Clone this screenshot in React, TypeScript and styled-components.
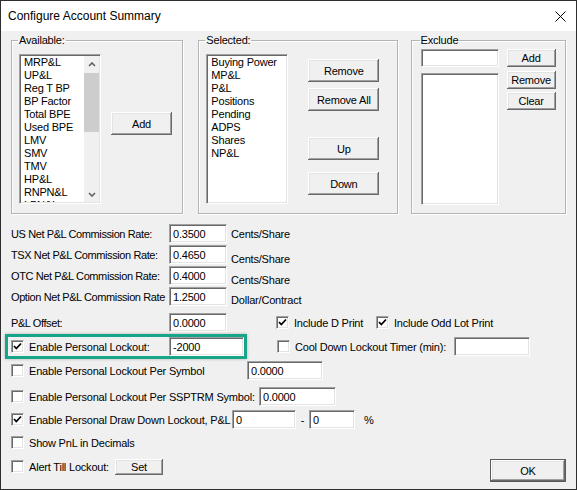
import React from "react";
import styled, { createGlobalStyle } from "styled-components";

const GlobalStyle = createGlobalStyle`
  html, body {
    margin: 0;
    padding: 0;
    background: #ffffff;
  }
`;

const Window = styled.div`
  width: 577px;
  height: 490px;
  box-sizing: border-box;
  border: 1px solid #2e2e2e;
  background: #f0f0f0;
  display: flex;
  flex-direction: column;
  font-family: "Liberation Sans", Arial, sans-serif;
  font-size: 11px;
  letter-spacing: -0.2px;
  color: #000;
  overflow: hidden;
`;

const TitleBar = styled.div`
  height: 30px;
  flex: none;
  background: #ffffff;
  display: flex;
  align-items: center;
  justify-content: space-between;
  padding: 0 10px 0 7px;
`;

const Title = styled.span`
  font-size: 12px;
  letter-spacing: 0;
`;

const Content = styled.div`
  flex: 1;
  padding: 3px 10px 0 10px;
  display: flex;
  flex-direction: column;
`;

const TopRow = styled.div`
  display: flex;
  align-items: flex-start;
`;

const Group = styled.fieldset<{ $width: number; $pad?: number; $ml?: number }>`
  margin: 0 0 0 ${(p) => p.$ml ?? 0}px;
  padding: 0 ${(p) => p.$pad ?? 7}px;
  min-width: 0;
  width: ${(p) => p.$width}px;
  height: 180px;
  box-sizing: border-box;
  border: 1px solid #b4b4b4;
  box-shadow: inset 1px 1px #ffffff, 1px 1px #ffffff;
`;

const Legend = styled.legend`
  padding: 0 1px;
  margin-left: -1px;
  line-height: 13px;
`;

const GroupBody = styled.div<{ $top?: number; $gap?: number }>`
  display: flex;
  align-items: flex-start;
  gap: ${(p) => p.$gap ?? 0}px;
  padding-top: ${(p) => p.$top ?? 0}px;
`;

const Column = styled.div<{ $ml?: number; $mt?: number }>`
  display: flex;
  flex-direction: column;
  margin-left: ${(p) => p.$ml ?? 0}px;
  margin-top: ${(p) => p.$mt ?? 0}px;
`;

const sunken = `
  border: 1px solid;
  border-color: #a0a0a0 #ffffff #ffffff #a0a0a0;
  box-shadow: inset 1px 1px #696969, inset -1px -1px #e3e3e3;
`;

const ListBox = styled.div<{ $width: number; $height: number; $mt?: number }>`
  ${sunken}
  width: ${(p) => p.$width}px;
  height: ${(p) => p.$height}px;
  margin-top: ${(p) => p.$mt ?? 0}px;
  box-sizing: border-box;
  padding: 1px;
  background: #ffffff;
  display: flex;
  overflow: hidden;
  flex: none;
`;

const ListItems = styled.div`
  flex: 1;
  padding: 0 0 0 3px;
  overflow: hidden;
`;

const Item = styled.div`
  line-height: 13px;
  white-space: nowrap;
`;

const ScrollBar = styled.div`
  width: 15px;
  flex: none;
  background: #f0f0f0;
  display: flex;
  flex-direction: column;
`;

const ScrollArrow = styled.div<{ $height: number }>`
  height: ${(p) => p.$height}px;
  display: flex;
  align-items: center;
  justify-content: center;
  flex: none;
`;

const ScrollThumb = styled.div`
  height: 59px;
  background: #cdcdcd;
  flex: none;
`;

const ScrollTrack = styled.div`
  flex: 1;
`;

const Button = styled.button<{ $width: number; $height?: number; $mt?: number; $default?: boolean }>`
  width: ${(p) => p.$width}px;
  height: ${(p) => p.$height ?? 23}px;
  margin: ${(p) => p.$mt ?? 0}px 0 0 0;
  padding: 0;
  box-sizing: border-box;
  flex: none;
  font-family: inherit;
  font-size: 11px;
  letter-spacing: -0.2px;
  color: #000;
  background: #f0f0f0;
  border: ${(p) => (p.$default ? "1px solid #5a5a5a" : "none")};
  box-shadow: inset -1px -1px #696969, inset 1px 1px #ffffff,
    inset -2px -2px #a0a0a0, inset 2px 2px #e3e3e3;
`;

const TextBox = styled.input<{ $width: number; $height?: number; $mt?: number }>`
  ${sunken}
  width: ${(p) => p.$width}px;
  height: ${(p) => p.$height ?? 19}px;
  margin: ${(p) => p.$mt ?? 0}px 0 0 0;
  box-sizing: border-box;
  padding: 0 0 0 3px;
  flex: none;
  background: #ffffff;
  font-family: inherit;
  font-size: 11px;
  letter-spacing: -0.2px;
  color: #000;
  outline: none;
`;

const FormRow = styled.div<{ $mt: number }>`
  display: flex;
  align-items: center;
  height: 19px;
  margin-top: ${(p) => p.$mt}px;
`;

const FieldLabel = styled.span`
  width: 158px;
  flex: none;
  white-space: nowrap;
  letter-spacing: -0.4px;
`;

const Unit = styled.span<{ $drop?: number }>`
  margin-left: 4px;
  padding-top: ${(p) => p.$drop ?? 0}px;
  white-space: nowrap;
`;

const CheckItem = styled.label<{ $ml?: number }>`
  display: flex;
  align-items: center;
  margin-left: ${(p) => p.$ml ?? 0}px;
`;

const CheckText = styled.span<{ $width?: number }>`
  margin-left: 5px;
  width: ${(p) => (p.$width ? `${p.$width}px` : "auto")};
  flex: none;
  white-space: nowrap;
`;

const Box = styled.span`
  ${sunken}
  width: 13px;
  height: 13px;
  box-sizing: border-box;
  flex: none;
  background: #ffffff;
  display: flex;
  align-items: center;
  justify-content: center;
`;

const Highlight = styled.div`
  display: flex;
  align-items: center;
  margin: -3px 0 -3px -6px;
  padding-left: 3px;
  border: 3px solid #17a589;
  box-shadow: 0 0 3px rgba(0, 0, 0, 0.25);
`;

const Dash = styled.span`
  width: 13px;
  text-align: center;
  flex: none;
`;

const Percent = styled.span`
  margin-left: 9px;
`;

const OkButton = styled(Button)`
  margin-left: auto;
  align-self: flex-start;
  margin-top: 2px;
`;

const Check: React.FC<{ checked?: boolean }> = ({ checked }) => (
  <Box>
    {checked && (
      <svg width="9" height="9" viewBox="0 0 9 9">
        <polyline points="1,4 3.3,6.5 8,1.5" fill="none" stroke="#000" strokeWidth="1.8" />
      </svg>
    )}
  </Box>
);

const Chevron: React.FC<{ down?: boolean }> = ({ down }) => (
  <svg width="8" height="5" viewBox="0 0 8 5">
    <polyline
      points={down ? "1,1 4,4 7,1" : "1,4 4,1 7,4"}
      fill="none"
      stroke="#606060"
      strokeWidth="1.6"
    />
  </svg>
);

const available = [
  "MRP&L", "UP&L", "Reg T BP", "BP Factor", "Total BPE", "Used BPE",
  "LMV", "SMV", "TMV", "HP&L", "RNPN&L", "LPN&L",
];

const selected = ["Buying Power", "MP&L", "P&L", "Positions", "Pending", "ADPS", "Shares", "NP&L"];

const App: React.FC = () => {
  return (
    <>
      <GlobalStyle />
      <Window>
        <TitleBar>
          <Title>Configure Account Summary</Title>
          <svg width="11" height="11" viewBox="0 0 11 11">
            <path d="M0.5 0.5 L10.5 10.5 M10.5 0.5 L0.5 10.5" stroke="#000" strokeWidth="1" />
          </svg>
        </TitleBar>
        <Content>
          <TopRow>
            <Group $width={173}>
              <Legend>Available:</Legend>
              <GroupBody $top={7}>
                <ListBox $width={82} $height={150}>
                  <ListItems>
                    {available.map((a) => (
                      <Item key={a}>{a}</Item>
                    ))}
                  </ListItems>
                  <ScrollBar>
                    <ScrollArrow $height={17}>
                      <Chevron />
                    </ScrollArrow>
                    <ScrollThumb />
                    <ScrollTrack />
                    <ScrollArrow $height={16}>
                      <Chevron down />
                    </ScrollArrow>
                  </ScrollBar>
                </ListBox>
                <Column $ml={10} $mt={58}>
                  <Button $width={61}>Add</Button>
                </Column>
              </GroupBody>
            </Group>
            <Group $width={200} $ml={15}>
              <Legend>Selected:</Legend>
              <GroupBody $top={7}>
                <ListBox $width={82} $height={150}>
                  <ListItems>
                    {selected.map((s) => (
                      <Item key={s}>{s}</Item>
                    ))}
                  </ListItems>
                </ListBox>
                <Column $ml={20} $mt={5}>
                  <Button $width={71}>Remove</Button>
                  <Button $width={71} $mt={6}>Remove All</Button>
                  <Button $width={71} $mt={26}>Up</Button>
                  <Button $width={71} $mt={12}>Down</Button>
                </Column>
              </GroupBody>
            </Group>
            <Group $width={156} $ml={13} $pad={9}>
              <Legend>Exclude</Legend>
              <GroupBody $gap={8}>
                <Column>
                  <TextBox $width={78} $height={18} $mt={2} />
                  <ListBox $width={78} $height={132} $mt={6} />
                </Column>
                <Column>
                  <Button $width={49} $height={18} $mt={2}>Add</Button>
                  <Button $width={49} $height={18} $mt={4}>Remove</Button>
                  <Button $width={49} $height={18} $mt={3}>Clear</Button>
                </Column>
              </GroupBody>
            </Group>
          </TopRow>

          <FormRow $mt={10}>
            <FieldLabel>US Net P&amp;L Commission Rate:</FieldLabel>
            <TextBox $width={58} defaultValue="0.3500" readOnly />
            <Unit>Cents/Share</Unit>
          </FormRow>
          <FormRow $mt={2}>
            <FieldLabel>TSX Net P&amp;L Commission Rate:</FieldLabel>
            <TextBox $width={58} defaultValue="0.4650" readOnly />
            <Unit $drop={9}>Cents/Share</Unit>
          </FormRow>
          <FormRow $mt={2}>
            <FieldLabel>OTC Net P&amp;L Commission Rate:</FieldLabel>
            <TextBox $width={58} defaultValue="0.4000" readOnly />
            <Unit $drop={9}>Cents/Share</Unit>
          </FormRow>
          <FormRow $mt={2}>
            <FieldLabel>Option Net P&amp;L Commission Rate</FieldLabel>
            <TextBox $width={58} defaultValue="1.2500" readOnly />
            <Unit $drop={7}>Dollar/Contract</Unit>
          </FormRow>
          <FormRow $mt={7}>
            <FieldLabel>P&amp;L Offset:</FieldLabel>
            <TextBox $width={58} defaultValue="0.0000" readOnly />
            <CheckItem $ml={49}>
              <Check checked />
              <CheckText $width={82}>Include D Print</CheckText>
            </CheckItem>
            <CheckItem>
              <Check checked />
              <CheckText>Include Odd Lot Print</CheckText>
            </CheckItem>
          </FormRow>
          <FormRow $mt={5}>
            <Highlight>
              <Check checked />
              <CheckText $width={140}>Enable Personal Lockout:</CheckText>
              <TextBox $width={75} defaultValue="-2000" readOnly />
            </Highlight>
            <CheckItem $ml={30}>
              <Check />
              <CheckText $width={159}>Cool Down Lockout Timer (min):</CheckText>
            </CheckItem>
            <TextBox $width={76} readOnly />
          </FormRow>
          <FormRow $mt={5}>
            <Check />
            <CheckText $width={218}>Enable Personal Lockout Per Symbol</CheckText>
            <TextBox $width={76} defaultValue="0.0000" readOnly />
          </FormRow>
          <FormRow $mt={7}>
            <Check />
            <CheckText $width={230}>Enable Personal Lockout Per SSPTRM Symbol:</CheckText>
            <TextBox $width={77} defaultValue="0.0000" readOnly />
          </FormRow>
          <FormRow $mt={4}>
            <Check checked />
            <CheckText $width={203}>Enable Personal Draw Down Lockout, P&amp;L</CheckText>
            <TextBox $width={64} defaultValue="0" readOnly />
            <Dash>-</Dash>
            <TextBox $width={46} defaultValue="0" readOnly />
            <Percent>%</Percent>
          </FormRow>
          <FormRow $mt={4}>
            <Check />
            <CheckText>Show PnL in Decimals</CheckText>
          </FormRow>
          <FormRow $mt={5}>
            <Check />
            <CheckText $width={86}>Alert Till Lockout:</CheckText>
            <Button $width={48} $height={16}>Set</Button>
            <OkButton $width={76} $default>OK</OkButton>
          </FormRow>
        </Content>
      </Window>
    </>
  );
};

export default App;
